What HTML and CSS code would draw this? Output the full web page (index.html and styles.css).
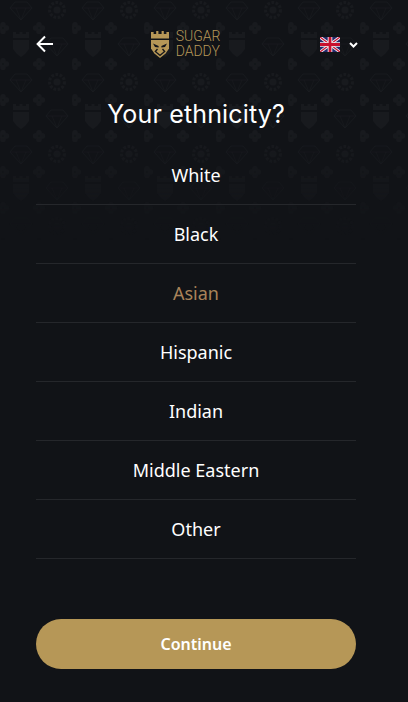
FILE: index.html
```html
<!DOCTYPE html>
<html lang="en">

<head>
    <meta charset="UTF-8">
    <meta name="viewport" content="width=device-width, initial-scale=1.0">
    <title>Your ethnicity?</title>
    <link rel="stylesheet" href="styles.css">
</head>

<body>

    <!-- Faded pattern behind the header -->
    <svg class="pattern" width="408" height="240" aria-hidden="true">
        <defs>
            <g id="clover">
                <circle cx="0" cy="-3.4" r="2.7"/>
                <circle cx="0" cy="3.4" r="2.7"/>
                <circle cx="-3.4" cy="0" r="2.7"/>
                <circle cx="3.4" cy="0" r="2.7"/>
            </g>
            <g id="gem">
                <path d="M-6 -8H6L11 -2L0 10L-11 -2Z" fill="none" stroke-width="1"/>
                <path d="M-11 -2H11M-5 -2L0 10L5 -2" fill="none" stroke-width="0.7"/>
            </g>
            <g id="lion">
                <path d="M-8 -13H-5V-11H-1.5V-13H1.5V-11H5V-13H8V-7H-8Z"/>
                <path d="M-8 -5H8V4L4 9L0 12L-4 9L-8 4Z"/>
            </g>
            <g id="chip">
                <circle r="7.5" fill="none" stroke-width="3" stroke-dasharray="2.6 1.6"/>
                <circle r="3.5"/>
            </g>
            <pattern id="tile" width="72" height="72" patternUnits="userSpaceOnUse">
                <g class="pattern-fill">
                    <use href="#lion" x="21" y="45"/>
                    <use href="#chip" x="57" y="10"/>
                    <use href="#clover" x="3" y="28"/>
                    <use href="#clover" x="39" y="28"/>
                    <use href="#clover" x="3" y="64"/>
                    <use href="#clover" x="39" y="64"/>
                    <use href="#gem" x="57" y="46"/>
                    <use href="#gem" x="21" y="10"/>
                </g>
            </pattern>
            <linearGradient id="fade" x1="0" y1="0" x2="0" y2="1">
                <stop offset="0" stop-color="#fff"/>
                <stop offset="0.55" stop-color="#fff"/>
                <stop offset="1" stop-color="#000"/>
            </linearGradient>
            <mask id="fadeMask">
                <rect width="408" height="240" fill="url(#fade)"/>
            </mask>
        </defs>
        <rect width="408" height="240" fill="url(#tile)" mask="url(#fadeMask)"/>
    </svg>

    <div class="container">
        <header class="header">
            <a class="back" href="#" aria-label="Back">
                <svg width="18" height="18" viewBox="0 0 18 18" fill="none" stroke="#fff" stroke-width="2">
                    <path d="M17 9H2M9 1.5L1.6 9L9 16.5"/>
                </svg>
            </a>

            <div class="logo">
                <svg width="18" height="27" viewBox="0 0 18 27" fill="#b69757">
                    <path d="M0 1H2.6V3H5.2V0H7.4V3H10.6V0H12.8V3H15.4V1H18V7.6H0Z"/>
                    <path d="M0 9H18V17.5L14.6 22.5L9 27L3.4 22.5L0 17.5Z"/>
                    <path d="M2 12.4L7.6 15V16.6L4 16ZM16 12.4L10.4 15V16.6L14 16Z" fill="#14151a"/>
                    <path d="M6 17.4L3.4 20.6L9 25.2L14.6 20.6L12 17.4L11 18.4L12.7 20.6L9 23.5L5.3 20.6L7 18.4Z" fill="#14151a"/>
                </svg>
                <span class="logo-text">SUGAR<br>DADDY</span>
            </div>

            <div class="lang">
                <svg width="20" height="15" viewBox="0 0 20 15">
                    <rect width="20" height="15" fill="#23296b"/>
                    <path d="M0 0L20 15M20 0L0 15" stroke="#f0eef2" stroke-width="3"/>
                    <path d="M0 0L20 15M20 0L0 15" stroke="#c8102e" stroke-width="1.2"/>
                    <path d="M10 0V15M0 7.5H20" stroke="#f0eef2" stroke-width="4.6"/>
                    <path d="M10 0V15M0 7.5H20" stroke="#c8102e" stroke-width="2.8"/>
                </svg>
                <svg width="9" height="6" viewBox="0 0 9 6" fill="none" stroke="#fff" stroke-width="2">
                    <path d="M1 1L4.5 4.5L8 1"/>
                </svg>
            </div>
        </header>

        <h1 class="title">Your ethnicity?</h1>

        <ul class="options">
            <li class="option">White</li>
            <li class="option">Black</li>
            <li class="option selected">Asian</li>
            <li class="option">Hispanic</li>
            <li class="option">Indian</li>
            <li class="option">Middle Eastern</li>
            <li class="option">Other</li>
        </ul>

        <button class="continue" type="button">Continue</button>
    </div>

</body>

</html>
```

FILE: styles.css
```css
html,
body {
    margin: 0;
    height: 100%;
}

body {
    position: relative;
    overflow: hidden;
    background-color: #111317;
    font-family: "Noto Sans", "Open Sans", sans-serif;
    color: #fff;
}

.pattern {
    position: absolute;
    top: 0;
    left: 0;
}

.pattern-fill {
    fill: #181a1e;
    stroke: #181a1e;
    stroke-width: 0;
}

.container {
    position: relative;
    box-sizing: border-box;
    width: 392px;
    padding: 24px 36px 0;
}

.header {
    display: flex;
    align-items: center;
    justify-content: space-between;
    height: 40px;
}

.back {
    display: flex;
    width: 18px;
}

.logo {
    display: flex;
    align-items: center;
    gap: 7px;
    margin-right: 3px;
}

.logo-text {
    font-family: Roboto, sans-serif;
    font-size: 14px;
    font-weight: 300;
    line-height: 15px;
    color: #b69757;
}

.lang {
    display: flex;
    align-items: center;
    gap: 9px;
    margin: 1px -2px 0 0;
}

.title {
    margin: 31px 0 0;
    font-family: Inter, sans-serif;
    font-size: 25px;
    font-weight: 400;
    line-height: 38px;
    letter-spacing: 0.15px;
    text-align: center;
}

.options {
    margin: 13px 0 0;
    padding: 0;
    list-style: none;
}

.option {
    height: 58px;
    border-bottom: 1px solid #25272b;
    font-size: 18px;
    line-height: 58px;
    text-align: center;
}

.selected {
    color: #a9835a;
}

.continue {
    display: block;
    width: 100%;
    height: 50px;
    margin-top: 60px;
    border: none;
    border-radius: 25px;
    background-color: #b69757;
    font-family: "Noto Sans", "Open Sans", sans-serif;
    font-size: 16px;
    font-weight: 600;
    color: #fff;
    cursor: pointer;
}
```
